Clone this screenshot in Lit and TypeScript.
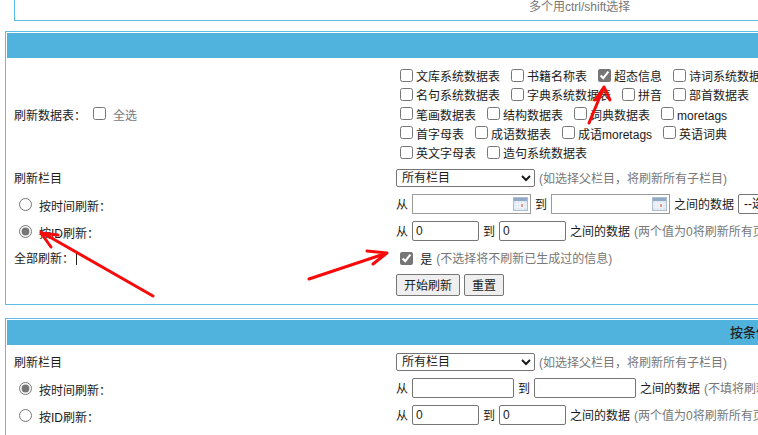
import { LitElement, html, css, svg } from "lit";
import { customElement } from "lit/decorators.js";

const tableRows: [string, boolean][][] = [
  [["文库系统数据表", false], ["书籍名称表", false], ["超态信息", true], ["诗词系统数据表", false]],
  [["名句系统数据表", false], ["字典系统数据表", false], ["拼音", false], ["部首数据表", false]],
  [["笔画数据表", false], ["结构数据表", false], ["词典数据表", false], ["moretags", false]],
  [["首字母表", false], ["成语数据表", false], ["成语moretags", false], ["英语词典", false]],
  [["英文字母表", false], ["造句系统数据表", false]],
];

@customElement("app-root")
export class AppRoot extends LitElement {
  static styles = css`
    :host { display: block; width: 758px; height: 435px; overflow: hidden; position: relative; background: #fff;
      font: 12px/18px "Liberation Sans", "Noto Sans CJK SC", sans-serif; color: #1a1a1a; }
    .top { margin: -20px 0 0 14px; width: 1000px; height: 41px; border: 1px solid #5dbce6; box-sizing: border-box; position: relative; }
    .hint { position: absolute; left: 514px; top: 17px; color: #777; white-space: nowrap; }
    .panel { width: 1000px; margin-left: 5px; border: 1px solid #5dbce6; box-sizing: border-box; padding: 1px; }
    .p1 { margin-top: 10px; height: 274px; }
    .p2 { margin-top: 13px; height: 200px; }
    .head { height: 25px; background: #4fb3dd; margin-bottom: 1px; font-size: 13px; line-height: 25px; color: #222; padding-left: 723px; white-space: nowrap; font-weight: 500; }
    .row { display: grid; grid-template-columns: 382px 1fr; grid-template-rows: minmax(0, 1fr); align-items: center; padding-left: 7px; }
    .t { padding-top: 2px; }
    .t2 { padding-top: 4px; }
    .t25 { padding-top: 5px; }
    .radio-l { display: flex; align-items: center; gap: 7px; padding-left: 5px; }
    .radio-l span { margin-top: 6px; }
    .tables { display: flex; flex-direction: column; padding: 1px 0 0 4px; }
    .trow { display: flex; height: 19.25px; align-items: center; gap: 11px; white-space: nowrap; }
    .c { display: flex; align-items: center; gap: 3px; }
    input[type=checkbox], input[type=radio] { margin: 0; width: 13px; height: 13px; accent-color: #767676; }
    .muted { color: #777; }
    .all { display: flex; align-items: center; gap: 7px; }
    .all label { display: flex; align-items: center; gap: 7px; }
    select { width: 139px; height: 18px; font: inherit; padding: 0 0 0 1px; margin: 0; border: 1px solid #767676; border-radius: 2px; background: #fff; color: #1a1a1a; }
    .line { display: flex; align-items: center; gap: 4px; white-space: nowrap; }
    .field { box-sizing: border-box; height: 20px; border: 1px solid #767676; border-radius: 2px; padding: 0 3px; font: inherit; color: #1a1a1a; margin: 0; background: #fff; }
    .w67 { width: 67px; }
    .w102 { width: 102px; }
    .date { width: 119px; display: inline-flex; align-items: center; justify-content: flex-end; padding-right: 2px; border-color: #9a9a9a; border-radius: 0; }
    select.choose { height: 20px; width: 60px; }
    button { box-sizing: border-box; height: 22px; font: inherit; padding: 2px 7px 0; border: 1px solid #767676; border-radius: 2px; background: #efefef; color: #1a1a1a; margin: 0; }
    .btns { display: flex; gap: 4px; }
    .caret { display: inline-block; width: 1px; height: 13px; background: #222; margin-left: 2px; vertical-align: -2px; }
    .yes { padding-left: 4px; }
    .h-108 { height: 108px; } .h-22 { height: 22px; } .h-30 { height: 30px; } .h-24 { height: 24px; }
    .h-32 { height: 32px; } .h-20 { height: 20px; } .mb-7 { margin-bottom: 7px; }
    .arrows { position: absolute; inset: 0; pointer-events: none; }
  `;

  private cal() {
    return html`<svg width="15" height="14" viewBox="0 0 15 14"><rect x="0.5" y="0.5" width="14" height="13" fill="#dce6f1" stroke="#aebfd2"/><rect x="1" y="1" width="13" height="3" fill="#8fa9c6"/><path d="M4 4v9M7 4v9M10 4v9M1 7h13M1 10h13" stroke="#f4f7fb"/><rect x="8" y="7" width="2" height="3" fill="#e39a86"/></svg>`;
  }

  private selectRow() {
    return html`<div class="t">刷新栏目</div>
      <div class="line"><select><option>所有栏目</option></select><span class="muted t">(如选择父栏目，将刷新所有子栏目)</span></div>`;
  }

  private idLine() {
    return html`<div class="line"><span class="t">从</span><input class="field w67" value="0" /><span class="t">到</span><input class="field w67" value="0" /><span class="t">之间的数据</span><span class="muted t">(两个值为0将刷新所有页面)</span></div>`;
  }

  render() {
    return html`
      <div class="top"><span class="hint">多个用ctrl/shift选择</span></div>

      <div class="panel p1">
        <div class="head"></div>
        <div class="row h-108">
          <div class="all"><span class="t25">刷新数据表：</span><label><input type="checkbox" /><span class="muted t25">全选</span></label></div>
          <div class="tables">
            ${tableRows.map((r) => html`<div class="trow">${r.map(([t, on]) => html`<label class="c"><input type="checkbox" ?checked=${on} /><span class="t2">${t}</span></label>`)}</div>`)}
          </div>
        </div>
        <div class="row h-22">${this.selectRow()}</div>
        <div class="row h-30">
          <div class="radio-l"><input type="radio" name="a" /><span>按时间刷新：</span></div>
          <div class="line"><span class="t">从</span><span class="field date">${this.cal()}</span><span class="t">到</span><span class="field date">${this.cal()}</span><span class="t">之间的数据</span><select class="choose"><option>--选择</option></select></div>
        </div>
        <div class="row h-24">
          <div class="radio-l"><input type="radio" name="a" checked /><span>按ID刷新：</span></div>
          ${this.idLine()}
        </div>
        <div class="row h-30">
          <div class="t">全部刷新：<span class="caret"></span></div>
          <div class="line yes"><input type="checkbox" checked /><span class="t2">&nbsp;是</span><span class="muted t">(不选择将不刷新已生成过的信息)</span></div>
        </div>
        <div class="row h-24">
          <div></div>
          <div class="btns"><button>开始刷新</button><button>重置</button></div>
        </div>
      </div>

      <div class="panel p2">
        <div class="head">按条件刷新</div>
        <div class="row h-32">${this.selectRow()}</div>
        <div class="row h-20 mb-7">
          <div class="radio-l"><input type="radio" name="b" checked /><span>按时间刷新：</span></div>
          <div class="line"><span class="t">从</span><input class="field w102" /><span class="t">到</span><input class="field w102" /><span class="t">之间的数据</span><span class="muted t">(不填将刷新所有页面)</span></div>
        </div>
        <div class="row h-20">
          <div class="radio-l"><input type="radio" name="b" /><span>按ID刷新：</span></div>
          ${this.idLine()}
        </div>
      </div>

      <svg class="arrows" width="758" height="435" viewBox="0 0 758 435" fill="none" stroke="#f60a0a" stroke-width="3" stroke-linecap="round" stroke-linejoin="round">
        ${svg`<path d="M153 296L41 232M58 235L41 233L51 247"/>
        <path d="M309 279L387 253M367 251L387 253L373 264"/>
        <path d="M589 123L604 87M595 100L604 87L610 100"/>`}
      </svg>
    `;
  }
}
